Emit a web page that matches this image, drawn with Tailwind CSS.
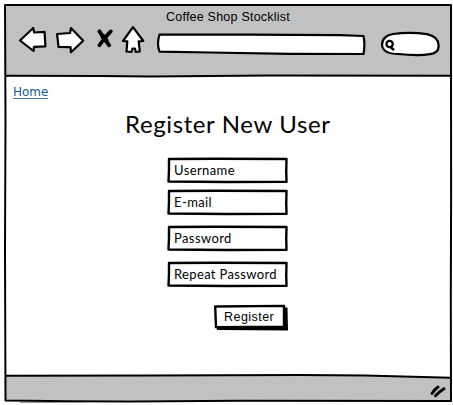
<!DOCTYPE html>
<html lang="en">
<head>
<meta charset="utf-8">
<title>Coffee Shop Stocklist</title>
<script src="https://cdn.jsdelivr.net/npm/@tailwindcss/browser@4"></script>
</head>
<body class="bg-white overflow-hidden">
<div class="relative isolate flex h-[405px] w-[453px] flex-col overflow-hidden font-['Lato','Liberation_Sans',sans-serif] text-black">
  <!-- sketched window frame -->
  <svg class="absolute inset-0 -z-10" width="453" height="405" viewBox="0 0 453 405" fill="none" stroke="#000" stroke-width="2" stroke-linejoin="round">
    <path d="M5.5 5H451V75.5L250 75.7L6 76Z" fill="#c1c1c1" stroke="none"/>
    <path d="M6 376L340 375.3L451 378V401L6 400.5Z" fill="#c1c1c1" stroke="none"/>
    <path d="M5 5L240 5.1L451 5L451.1 200L450.8 300L451 401L240 400.8L130 401.5L70 401.2L5.5 400.5L5 250L5.5 120Z"/>
    <path d="M5 75.8L100 76L150 76.4L270 75.6L451 75.8"/>
    <path d="M6 375.8L150 375.5L300 374.9L365 375.5L451 377.8"/>
    <path d="M20 402.5H85" stroke="#999" stroke-width="1"/>
  </svg>

  <header class="flex h-[77px] shrink-0 flex-col">
    <h1 class="ml-[166px] mt-[9px] h-4 whitespace-nowrap font-['Liberation_Sans',sans-serif] text-[12.5px] leading-4 tracking-[0.22px]">Coffee Shop Stocklist</h1>
    <nav class="flex items-start">
      <svg class="ml-[18px]" width="30" height="30" viewBox="18 25 30 30" fill="#fff" stroke="#000" stroke-width="2.2" stroke-linejoin="round"><path d="M20 40.5L33.2 28L34.2 32.5L44.5 31.8L45 39L45.4 46.3L34 46.8L33.5 51Z"/></svg>
      <svg class="ml-[7px]" width="30" height="30" viewBox="55 25 30 30" fill="#fff" stroke="#000" stroke-width="2.2" stroke-linejoin="round"><path d="M57 34L70 33L71 28L83.2 40.7L71 52.3L70.5 47.2L58.5 46.8L57.8 40Z"/></svg>
      <svg class="ml-[11px]" width="18" height="30" viewBox="96 25 18 30" fill="none" stroke="#000" stroke-linecap="round"><path d="M99.4 31.3Q103 37 109.2 45.3" stroke-width="3.8"/><path d="M110.8 31.4Q105 37 99.4 45.2" stroke-width="3.8"/><path d="M103 36.5L106 40.5" stroke-width="5"/></svg>
      <svg class="ml-[7px]" width="25" height="30" viewBox="121 25 25 30" fill="#fff" stroke="#000" stroke-width="2.2" stroke-linejoin="round"><path d="M133 27.2L143.3 41L138.7 41.4L139.8 51.5L135.7 52L135 48.5H132.5L131.5 52L126.5 51.5L127.3 41.4L123 41Z"/></svg>
      <svg class="ml-[10px]" width="212" height="30" viewBox="156 25 212 30" fill="#fff" stroke="#000" stroke-width="2.2" stroke-linejoin="round"><path d="M159.5 34.5L250 34.7L340 35.2L363.5 36Q365.3 44 363.5 54L290 53.8L210 52.5L159.5 51.7Q156.5 44 159.5 34.5Z"/></svg>
      <svg class="ml-3" width="62" height="32" viewBox="380 25 62 32" fill="#fff" stroke="#000" stroke-width="2.2" stroke-linejoin="round"><path d="M382 45Q382 36 393 34Q410 31.5 427 34.2Q438 36.5 438.5 45Q439.5 53 430 54.2Q418 56 398 54Q383 54 382 45Z"/><circle cx="389.6" cy="44" r="3.2" stroke-width="2.2"/><path d="M390.5 47L394 50.2" stroke-width="2.4"/></svg>
    </nav>
  </header>

  <main class="flex h-[299px] shrink-0 flex-col">
    <a href="#" class="ml-[13px] mt-[7px] h-[15px] self-start border-b border-[#4b78ab] font-['DejaVu_Sans',sans-serif] text-[12px] leading-[17px] text-[#1b568f]">Home</a>
    <h2 class="ml-[125px] mt-[11px] mb-px h-[28px] whitespace-nowrap text-[24px] leading-[27px] tracking-[0.62px]">Register New User</h2>
    <form class="ml-[167px] mt-[18px] flex w-[122px] flex-col">
      <label class="relative isolate flex h-[28px] items-center pb-px pl-[7px] text-[13px] tracking-[0.4px]">
        <svg class="absolute inset-0 -z-10" width="122" height="28" viewBox="0 0 122 28" fill="#fff" stroke="#000" stroke-width="2.4" stroke-linejoin="round"><path d="M2 2L50 1.7L119.5 2Q119 14 119.5 24.8L60 25L1.5 24.5Q2.2 12 2 2Z"/></svg>Username</label>
      <label class="relative isolate mt-1 flex h-[28px] items-center pb-px pl-[7px] text-[13px] tracking-[0.4px]">
        <svg class="absolute inset-0 -z-10" width="122" height="28" viewBox="0 0 122 28" fill="#fff" stroke="#000" stroke-width="2.4" stroke-linejoin="round"><path d="M2 2L50 1.7L119.5 2Q119 14 119.5 24.8L60 25L1.5 24.5Q2.2 12 2 2Z"/></svg>E-mail</label>
      <label class="relative isolate mt-2 flex h-[28px] items-center pb-px pl-[7px] text-[13px] tracking-[0.4px]">
        <svg class="absolute inset-0 -z-10" width="122" height="28" viewBox="0 0 122 28" fill="#fff" stroke="#000" stroke-width="2.4" stroke-linejoin="round"><path d="M2 2L50 1.7L119.5 2Q119 14 119.5 24.8L60 25L1.5 24.5Q2.2 12 2 2Z"/></svg>Password</label>
      <label class="relative isolate mt-2 flex h-[28px] items-center whitespace-nowrap pb-px pl-[7px] text-[13px] tracking-[0.35px]">
        <svg class="absolute inset-0 -z-10" width="122" height="28" viewBox="0 0 122 28" fill="#fff" stroke="#000" stroke-width="2.4" stroke-linejoin="round"><path d="M2 2L50 1.7L119.5 2Q119 14 119.5 24.8L60 25L1.5 24.5Q2.2 12 2 2Z"/></svg>Repeat Password</label>
      <button type="button" class="relative isolate ml-[46px] mt-[15px] flex h-[28px] w-[76px] items-center pb-[2px] pl-[11px] font-['Liberation_Sans',sans-serif] text-[12.5px] tracking-[0.45px]">
        <svg class="absolute inset-0 -z-10" width="76" height="28" viewBox="0 0 76 28" stroke="#000" stroke-linejoin="round"><path d="M4 4L74.5 3.5L75 26.5L4 26Z" fill="#000" stroke="none"/><path d="M2.2 2.5L71 1.9L71 22.8L3 23.3Z" fill="#fff" stroke-width="2.4"/></svg>Register</button>
    </form>
  </main>

  <footer class="flex h-[29px] shrink-0 justify-end pr-[4px] pt-[7px]">
    <svg width="20" height="16" viewBox="430 382 20 16" fill="none" stroke="#000" stroke-width="3" stroke-linecap="round"><path d="M433 392.5Q435.5 388.5 439 386M436.5 394.8Q440.5 390.5 445 387.8"/></svg>
  </footer>
</div>
</body>
</html>
